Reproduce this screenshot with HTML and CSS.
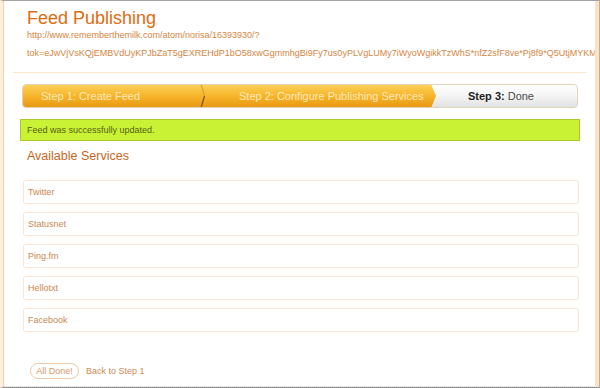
FILE: index.html
```html
<!DOCTYPE html>
<html lang="en">
<head>
    <meta charset="UTF-8">
    <title>Feed Publishing</title>
    <link rel="stylesheet" href="styles.css">
</head>
<body>
    <div id="window">
        <div id="page">
            <h1 class="title">Feed Publishing</h1>
            <div class="feed-url">http://www.rememberthemilk.com/atom/norisa/16393930/?<br>tok=eJwVjVsKQjEMBVdUyKPJbZaT5gEXREHdP1bO58xwGgmmhgBi9Fy7us0yPLVgLUMy7iWyoWgikkTzWhS*nfZ2sfF8ve*Pj8f9*Q5UtjMYKMf45wwG</div>
            <div class="rule"></div>

            <div class="steps">
                <div class="steps-done">
                    <span class="step step-one">Step 1: Create Feed</span>
                    <svg class="sep" width="6" height="24" viewBox="0 0 6 24">
                        <path d="M1 0 L4.5 12" stroke="#e0a030" stroke-width="1.2" fill="none"/>
                        <path d="M4.5 12 L1 24" stroke="#7e5210" stroke-width="1.2" fill="none"/>
                    </svg>
                    <span class="step step-two">Step 2: Configure Publishing Services</span>
                </div>
                <div class="step step-three"><b>Step 3:</b> Done</div>
            </div>

            <div class="notice">Feed was successfully updated.</div>

            <h2 class="subtitle">Available Services</h2>

            <div class="services">
                <div class="service">Twitter</div>
                <div class="service">Statusnet</div>
                <div class="service">Ping.fm</div>
                <div class="service">Hellotxt</div>
                <div class="service">Facebook</div>
            </div>

            <div class="actions">
                <button class="btn-done">All Done!</button>
                <a class="back" href="#">Back to Step 1</a>
            </div>
        </div>
    </div>
</body>
</html>
```

FILE: styles.css
```css
* {
    margin: 0;
    padding: 0;
    box-sizing: border-box;
}

body {
    font-family: "Liberation Sans", Arial, sans-serif;
    background-color: white;
}

#window {
    height: 388px;
    border-top: 1px solid #a3a3a3;
    border-bottom: 1px solid #8e8e8e;
    border-left: 3px solid #fcefde;
    border-right: 1px solid #b8b0a4;
    overflow: hidden;
}
#page {
    height: 386px;
    border-left: 1px solid #efd2a9;
    border-right: 4px solid #f9e3c4;
    border-bottom: 1px dotted #d8d8d8;
    padding: 9px 15px 0 16px;
    overflow: hidden;
}

.title {
    font-size: 18px;
    line-height: 16px;
    font-weight: normal;
    color: #df6b12;
    padding-left: 7px;
}
.feed-url {
    font-size: 9px;
    line-height: 18px;
    color: #d5853f;
    padding-left: 7px;
    white-space: nowrap;
}
.rule {
    height: 1px;
    background-color: #fbe5cb;
    margin: 10px -7px 0;
}

.steps {
    display: flex;
    height: 24px;
    margin: 11px 2px 0;
    border: 1px solid #e2d3bb;
    border-radius: 4px;
    overflow: hidden;
    background: linear-gradient(#ffffff, #f4f4f4 50%, #e2e2e2);
}
.steps-done {
    display: flex;
    align-items: center;
    width: 414px;
    margin: -1px 0 -1px -1px;
    background: linear-gradient(#fdd15a, #f7b52c 50%, #e6960f);
    clip-path: polygon(0 0, calc(100% - 5px) 0, 100% 50%, calc(100% - 5px) 100%, 0 100%);
}
.step {
    font-size: 11px;
    color: #fde9bd;
}
.step-one {
    width: 178px;
    padding-left: 19px;
}
.sep {
    display: block;
}
.step-two {
    padding-left: 33px;
}
.step-three {
    flex: 1;
    display: flex;
    align-items: center;
    padding-left: 32px;
    color: #4a4a4a;
}
.step-three b {
    color: #222;
    margin-right: 3px;
}

.notice {
    margin-top: 11px;
    height: 22px;
    line-height: 20px;
    padding-left: 6px;
    font-size: 9px;
    color: #55621a;
    background-color: #caf234;
    border: 1px solid #a9cc2c;
}

.subtitle {
    margin-top: 7px;
    font-size: 12.5px;
    line-height: 16px;
    font-weight: normal;
    color: #c8661c;
    padding-left: 7px;
}

.services {
    display: flex;
    flex-direction: column;
    gap: 8px;
    margin: 16px 1px 0 3px;
}
.service {
    height: 24px;
    line-height: 22px;
    padding-left: 4px;
    font-size: 9px;
    color: #c98852;
    border: 1px solid #f8e7d4;
    border-radius: 3px;
    box-shadow: 0 0 1px #fbeedf;
}

.actions {
    display: flex;
    align-items: center;
    margin: 31px 0 0 10px;
}
.btn-done {
    width: 49px;
    height: 16px;
    font-family: inherit;
    font-size: 9px;
    color: #d39a68;
    background-color: white;
    border: 1px solid #efcba8;
    border-radius: 8px;
}
.back {
    margin-left: 7px;
    font-size: 9px;
    color: #cf8a52;
    text-decoration: none;
}
```
